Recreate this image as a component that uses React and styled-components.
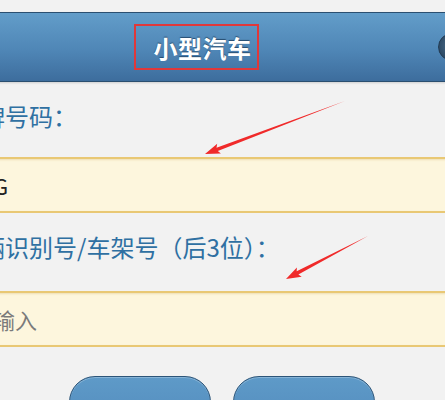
import React from 'react';
import styled, { createGlobalStyle } from 'styled-components';

// ===================== Global =====================

const GlobalStyle = createGlobalStyle`
  html, body {
    margin: 0;
    padding: 0;
    background: #f2f2f2;
    overflow: hidden;
  }
  body {
    font-family: 'Noto Sans CJK SC', 'Noto Sans', sans-serif;
  }
`;

// ===================== Styled Components =====================

const Screen = styled.div`
  position: relative;
  width: 445px;
  height: 400px;
  overflow: hidden;
  background: #f2f2f2;
`;

const Page = styled.div`
  width: 510px;
  margin-left: -50px;
  padding-top: 12px;
  display: flex;
  flex-direction: column;
`;

const Header = styled.div`
  height: 68px;
  display: grid;
  grid-template-columns: 1fr auto 1fr;
  align-items: center;
  background: linear-gradient(180deg, #629dc9 0%, #4f86b6 55%, #3d6d9d 100%);
  border-top: 1px solid #2b4f70;
  border-bottom: 1px solid #2b4f70;
  box-shadow: 0 1px 2px rgba(0, 0, 0, 0.15);
`;

const TitleBox = styled.div`
  grid-column: 2;
  box-sizing: border-box;
  width: 125px;
  height: 46px;
  margin-right: 17px;
  border: 2px solid #e0383a;
  display: flex;
  align-items: center;
  justify-content: center;
  padding-left: 12px;
  padding-top: 1px;
`;

const Title = styled.h1`
  margin: 0;
  font-size: 24px;
  font-weight: 700;
  color: #ffffff;
  letter-spacing: 0.5px;
  white-space: nowrap;
  text-shadow: 0 -1px 1px rgba(20, 50, 80, 0.7);
`;

const HeaderIcon = styled.div`
  grid-column: 3;
  justify-self: end;
  margin-right: -6px;
  width: 26px;
  height: 26px;
  border-radius: 50%;
  background: radial-gradient(circle at 50% 45%, #4f6f8c 0%, #2c4a66 70%);
  border: 1px solid #223a52;
`;

const Form = styled.div`
  display: flex;
  flex-direction: column;
  padding: 0 0 0 7px;
`;

const Label = styled.div`
  font-size: 24px;
  line-height: 30px;
  color: #2f70a2;
  margin-top: ${(p) => p.$top}px;
  white-space: nowrap;
`;

const Field = styled.div`
  margin-top: ${(p) => p.$top}px;
  height: 52px;
  background: #fdf6dd;
  border-top: 2px solid #e9c874;
  border-bottom: 2px solid #e9c874;
  box-shadow: inset 0 1px 2px rgba(200, 160, 60, 0.25);
  display: flex;
  align-items: center;
  padding-left: 14px;
  font-size: 22px;
  color: ${(p) => (p.$placeholder ? '#7a7a7a' : '#222222')};
  white-space: nowrap;
`;

const Buttons = styled.div`
  display: flex;
  gap: 22px;
  margin-top: 29px;
  padding-left: 119px;
`;

const Button = styled.div`
  width: 140px;
  height: 60px;
  border-radius: 26px;
  background: linear-gradient(180deg, #5e9ac8 0%, #5189bb 100%);
  border: 1px solid #2c5579;
  box-shadow: inset 0 1px 0 rgba(255, 255, 255, 0.25);
`;

const Overlay = styled.svg`
  position: absolute;
  inset: 0;
  pointer-events: none;
`;

// ===================== Arrow annotation =====================

function Arrow({ x1, y1, x2, y2 }) {
  const dx = x2 - x1;
  const dy = y2 - y1;
  const L = Math.hypot(dx, dy);
  const angle = (Math.atan2(dy, dx) * 180) / Math.PI;
  const pts = [
    [0, 0],
    [L - 13, -1.8],
    [L - 15, -5.2],
    [L, 0],
    [L - 15, 5.2],
    [L - 13, 1.8],
  ]
    .map((p) => p.join(','))
    .join(' ');
  return (
    <polygon
      points={pts}
      fill="#f02a2a"
      transform={`translate(${x1} ${y1}) rotate(${angle})`}
    />
  );
}

// ===================== Component =====================

function App() {
  return (
    <Screen>
      <GlobalStyle />
      <Page>
        <Header>
          <TitleBox>
            <Title>小型汽车</Title>
          </TitleBox>
          <HeaderIcon />
        </Header>

        <Form>
          <Label $top={19}>车牌号码：</Label>
          <Field $top={26}>粤G</Field>
          <Label $top={19}>车辆识别号/车架号（后3位）：</Label>
          <Field $top={29} $placeholder>请输入</Field>
        </Form>

        <Buttons>
          <Button />
          <Button />
        </Buttons>
      </Page>

      <Overlay width="445" height="400" viewBox="0 0 445 400">
        <Arrow x1={345} y1={101} x2={205} y2={154} />
        <Arrow x1={368} y1={236} x2={286} y2={279} />
      </Overlay>
    </Screen>
  );
}

export default App;
